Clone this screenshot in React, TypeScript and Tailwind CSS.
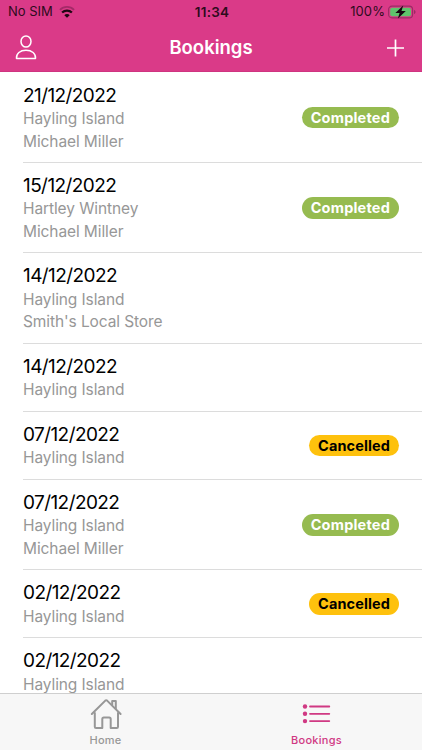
import React from "react";

interface Booking {
  date: string;
  place: string;
  customer?: string;
  status?: "Completed" | "Cancelled";
}

const bookings: Booking[] = [
  { date: "21/12/2022", place: "Hayling Island", customer: "Michael Miller", status: "Completed" },
  { date: "15/12/2022", place: "Hartley Wintney", customer: "Michael Miller", status: "Completed" },
  { date: "14/12/2022", place: "Hayling Island", customer: "Smith's Local Store" },
  { date: "14/12/2022", place: "Hayling Island" },
  { date: "07/12/2022", place: "Hayling Island", status: "Cancelled" },
  { date: "07/12/2022", place: "Hayling Island", customer: "Michael Miller", status: "Completed" },
  { date: "02/12/2022", place: "Hayling Island", status: "Cancelled" },
  { date: "02/12/2022", place: "Hayling Island" },
];

const StatusBar = () => (
  <div className="grid h-[23px] grid-cols-3 items-center pr-[6px] pl-2 text-[13px] text-[#2e0b1d]">
    <div className="flex items-center gap-[6px]">
      <span>No SIM</span>
      <svg width="16" height="12" viewBox="0 0 16 12" fill="none">
        <path d="M0.9 3.8a10.2 10.2 0 0 1 14.2 0" stroke="#a52a68" strokeWidth="1.8" />
        <path d="M3.1 6.6a6.9 6.9 0 0 1 9.8 0" stroke="#1d0712" strokeWidth="2.2" />
        <path d="M8 11.8 5.3 9.2a3.7 3.7 0 0 1 5.4 0z" fill="#1d0712" />
      </svg>
    </div>
    <span className="pt-px text-center text-[13.5px] font-semibold tracking-[0.2px]">11:34</span>
    <div className="flex items-center justify-end gap-[3px]">
      <span className="tracking-[0.1px]">100%</span>
      <svg width="28" height="14" viewBox="0 0 28 14" fill="none">
        <rect x="0.6" y="1.1" width="24" height="11.8" rx="3.4" stroke="#9a2c64" strokeWidth="1.1" />
        <rect x="2.2" y="2.7" width="20.8" height="8.6" rx="2" fill="#5fc46c" />
        <path d="M26 5v4c1-.3 1.5-1 1.5-2S27 5.3 26 5z" fill="#9a2c64" />
        <path d="M15.2 0.4 7.4 7.9h4.2L9.9 13.6l7.9-7.6h-4.3z" fill="#150810" />
      </svg>
    </div>
  </div>
);

const Header = () => (
  <header className="h-[72px] shrink-0 border-b border-[#cf3480] bg-[#da3a88]">
    <StatusBar />
    <div className="grid h-[49px] grid-cols-3 items-center px-[15px] text-white">
      <svg width="22" height="25" viewBox="0 0 22 25" fill="none" stroke="#fff" strokeWidth="1.5">
        <ellipse cx="11" cy="6.5" rx="5" ry="5.5" />
        <path d="M1.5 23.4H20.5C21 18.5 16.8 15.2 11 15.2S1 18.5 1.5 23.4Z" strokeLinejoin="round" />
      </svg>
      <h1 className="pt-px text-center text-[18.5px] font-semibold">Bookings</h1>
      <svg className="justify-self-end" width="22" height="20" viewBox="0 0 22 20" stroke="#fff" strokeWidth="1.7">
        <path d="M10.5 1.5v17M2 10h17" />
      </svg>
    </div>
  </header>
);

const BookingRow = ({ date, place, customer, status }: Booking) => (
  <li className="flex items-center justify-between border-b border-[#dcdcdc] pt-[11px] pr-[23px] pb-[8.9px]">
    <div className="text-[15.5px] leading-[22.6px] tracking-[-0.1px] text-[#979797]">
      <p className="text-[19px] leading-[24.4px] tracking-[-0.58px] text-black">{date}</p>
      <p>{place}</p>
      {customer && <p>{customer}</p>}
    </div>
    {status === "Completed" && (
      <span className="mb-[1.4px] rounded-full bg-[#96bb50] px-[9px] text-[14.5px] leading-[21.5px] font-bold tracking-[0.2px] text-white">
        {status}
      </span>
    )}
    {status === "Cancelled" && (
      <span className="mb-[1.4px] rounded-full bg-[#fec10d] px-[9px] text-[14.5px] leading-[21.5px] font-bold tracking-[0.1px] text-black">
        {status}
      </span>
    )}
  </li>
);

const TabBar = () => (
  <nav className="grid h-[57px] shrink-0 grid-cols-2 border-t border-[#cfcfcf] bg-[#f7f7f7] text-[11px] font-medium tracking-[0.25px]">
    <a className="flex flex-col items-center gap-px pt-1 text-[#979797]">
      <svg width="34" height="34" viewBox="0 0 34 34" fill="none" stroke="currentColor" strokeWidth="2" strokeLinejoin="round" strokeLinecap="round">
        <path d="M5.8 15V28.8q0 1.2 1.2 1.2H13.3V21q0-1.5 1.5-1.5h5.4q1.5 0 1.5 1.5v9H27.8q1.2 0 1.2-1.2V15" />
        <path d="M2.8 16 16.3 2.6q.9-.8 1.8 0L31.6 16" />
        <path d="M23.2 7V3h3.6v7.5" />
      </svg>
      <span className="leading-[14px]">Home</span>
    </a>
    <a className="flex flex-col items-center gap-px pt-1 text-[#d03983]">
      <svg width="34" height="34" viewBox="0 0 34 34" stroke="currentColor" strokeWidth="1.8" strokeLinecap="round">
        <path d="M10 8.5H29.3M10 15.8H29.3M10 23.1H29.3" />
        <g fill="currentColor" stroke="none">
          <circle cx="5" cy="8.5" r="2.2" />
          <circle cx="5" cy="15.8" r="2.2" />
          <circle cx="5" cy="23.1" r="2.2" />
        </g>
      </svg>
      <span className="leading-[14px]">Bookings</span>
    </a>
  </nav>
);

const App = () => {
  return (
    <div className="flex h-[750px] w-[422px] flex-col overflow-hidden bg-white font-['Inter',sans-serif]">
      <Header />
      <ul className="min-h-0 flex-1 overflow-hidden pt-[0.5px] pl-[23px]">
        {bookings.map((booking, i) => (
          <BookingRow key={i} {...booking} />
        ))}
      </ul>
      <TabBar />
    </div>
  );
};

export default App;
